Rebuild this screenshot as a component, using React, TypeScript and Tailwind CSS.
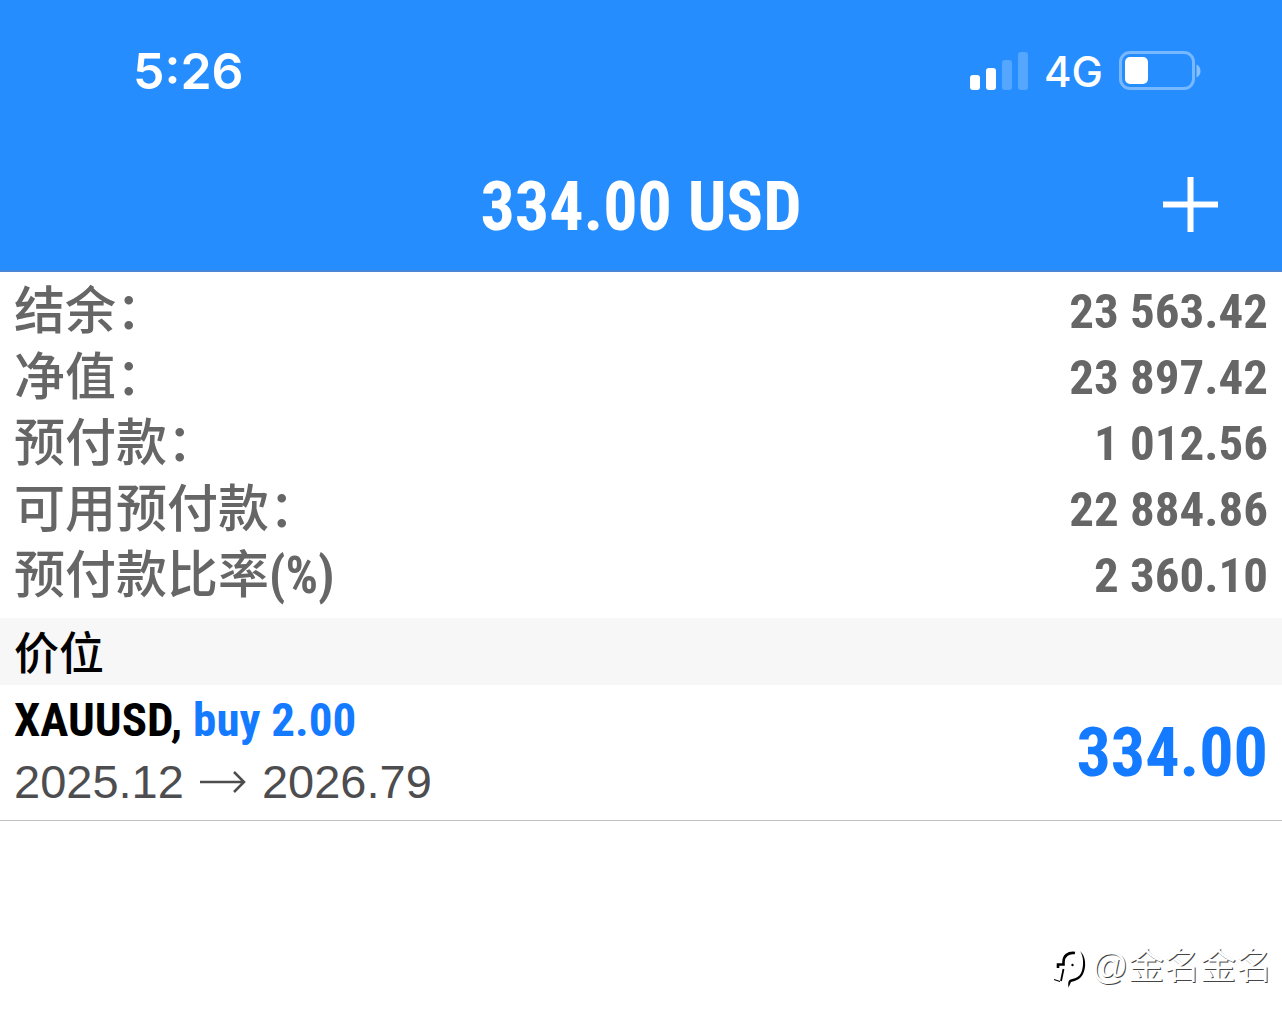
import type { ReactNode } from "react";

const summary = [
  { label: "结余：", value: "23 563.42" },
  { label: "净值：", value: "23 897.42" },
  { label: "预付款：", value: "1 012.56" },
  { label: "可用预付款：", value: "22 884.86" },
  { label: "预付款比率", unit: "(%)", value: "2 360.10" }
];

const positions = [
  { symbol: "XAUUSD", side: "buy 2.00", open: "2025.12", current: "2026.79", profit: "334.00" }
];

function Condensed({ className = "", children }: { className?: string; children: ReactNode }) {
  return (
    <span className={`font-['Roboto_Condensed','Roboto',sans-serif] font-bold ${className}`}>{children}</span>
  );
}

function SignalIcon() {
  return (
    <svg width="58" height="38" viewBox="0 0 58 38" fill="#fff" aria-hidden="true">
      <rect x="0" y="23" width="10" height="15" rx="3" />
      <rect x="16" y="16" width="10" height="22" rx="3" />
      <rect x="32" y="8" width="10" height="30" rx="3" opacity="0.22" />
      <rect x="48" y="0" width="10" height="38" rx="3" opacity="0.22" />
    </svg>
  );
}

function BatteryIcon() {
  return (
    <svg width="82" height="40" viewBox="0 0 82 40" fill="none" aria-hidden="true">
      <rect x="1.5" y="1.5" width="73" height="36" rx="9.5" stroke="#fff" strokeOpacity="0.38" strokeWidth="3" />
      <rect x="6" y="6" width="23" height="27" rx="5" fill="#fff" />
      <path d="M77.5 13.500c2.500 1 4 3.500 4 6.500s-1.500 5.500-4 6.500z" fill="#fff" fillOpacity="0.45" />
    </svg>
  );
}

function WatermarkLogo() {
  return (
    <svg width="36" height="42" viewBox="0 0 36 42" fill="none" aria-hidden="true">
      <path d="M24 7C17 6 12.500 10 12.500 16v2.500H7V22" stroke="#000" strokeWidth="2.600" />
      <path d="M12.500 23L10 35" stroke="#000" strokeWidth="1.800" />
      <path d="M3 33.500l6 2" stroke="#000" strokeWidth="1.200" />
      <circle cx="21.500" cy="19" r="1.200" fill="#000" />
      <path
        d="M29 5c6 5 6.500 16 3 23-2.500 5-7 7-12 8l-2.500 5.500c-.5-4-.5-7 2-8 5-1 9-2.500 11-7.500 2.500-7 2-16-1.500-21z"
        fill="#000"
      />
    </svg>
  );
}

export default function App() {
  return (
    <div
      lang="zh-CN"
      className="flex min-h-screen flex-col bg-white font-['Liberation_Sans','Noto_Sans_CJK_SC',sans-serif]"
    >
      <header className="border-b-2 border-[#4b87d8] bg-[#268dff] text-white">
        <div className="flex h-[142px] items-center justify-between pr-[81px] pl-[133px] font-['Inter',sans-serif]">
          <time className="text-[50px] font-semibold">5:26</time>
          <div className="flex items-center gap-4">
            <SignalIcon />
            <span className="text-[42px] font-medium">4G</span>
            <BatteryIcon />
          </div>
        </div>
        <div className="grid h-32 grid-cols-[1fr_auto_1fr] items-center pr-16 pb-1">
          <h1 className="col-start-2 pt-1 pl-16 text-[68px] leading-none">
            <Condensed>334.00 USD</Condensed>
          </h1>
          <button type="button" aria-label="Add" className="justify-self-end">
            <svg width="55" height="55" viewBox="0 0 55 55" stroke="#fff" strokeWidth="6" aria-hidden="true">
              <path d="M27.500 0v55M0 27.500h55" />
            </svg>
          </button>
        </div>
      </header>

      <main className="flex-1">
        <dl className="pt-[6px] pb-[10px] text-[#666]">
          {summary.map((row) => (
            <div key={row.label} className="flex h-[66px] items-center justify-between px-[14px]">
              <dt className="text-[51px] leading-none font-medium">
                {row.label}
                {row.unit ? <Condensed>{row.unit}</Condensed> : null}
              </dt>
              <dd className="text-[49px] leading-none">
                <Condensed>{row.value}</Condensed>
              </dd>
            </div>
          ))}
        </dl>

        <h2 className="flex h-[67px] items-center bg-[#f7f7f7] px-[14px] pt-[6px] text-[45px] leading-none font-medium text-black">
          价位
        </h2>

        <ul>
          {positions.map((p) => (
            <li
              key={p.symbol}
              className="flex h-[136px] items-center justify-between border-b border-[#c0c0c0] px-[14px]"
            >
              <div className="pb-1">
                <p className="text-[47px] leading-[62px] text-black">
                  <Condensed>
                    {p.symbol}, <span className="text-[#147aff]">{p.side}</span>
                  </Condensed>
                </p>
                <p className="flex items-center gap-4 text-[47px] leading-[62px] text-[#4d4d4f]">
                  {p.open}
                  <svg width="46" height="22" viewBox="0 0 46 22" fill="none" stroke="currentColor" strokeWidth="2.500" aria-hidden="true">
                    <path d="M0 11h44M34 1l10 10-10 10" />
                  </svg>
                  {p.current}
                </p>
              </div>
              <Condensed className="text-[68px] leading-none text-[#147aff]">{p.profit}</Condensed>
            </li>
          ))}
        </ul>
      </main>

      <footer className="flex items-center justify-end gap-1 pr-[10px] pb-9">
        <WatermarkLogo />
        <span className="text-[36px] leading-[46px] text-white [text-shadow:1px_1px_0_#444]">@金名金名</span>
      </footer>
    </div>
  );
}
